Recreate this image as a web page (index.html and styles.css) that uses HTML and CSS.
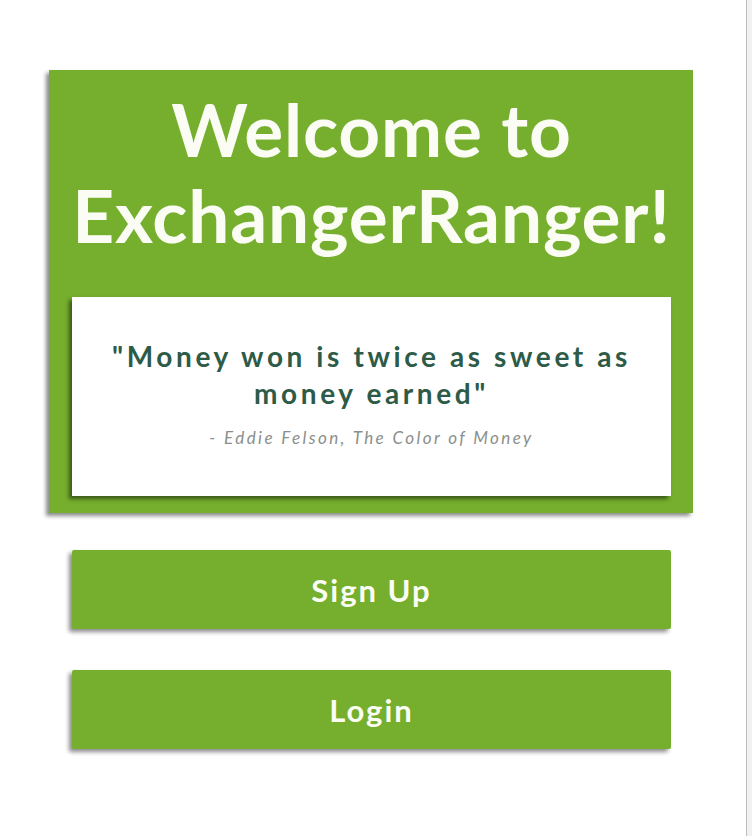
FILE: index.html
```html
<!DOCTYPE html>
<html>
<head>
<meta charset="utf-8">
<link rel="stylesheet" href="styles.css">
</head>
<body>
<div class="page">
  <section class="hero">
    <h1 class="title">Welcome to<br>ExchangerRanger!</h1>
    <div class="quote-card">
      <p class="quote">"Money won is twice as sweet as money earned"</p>
      <p class="cite">- Eddie Felson, The Color of Money</p>
    </div>
  </section>
  <div class="actions">
    <button class="btn">Sign Up</button>
    <button class="btn">Login</button>
  </div>
</div>
</body>
</html>
```

FILE: styles.css
```css
html {
  background: #f1f1f1;
}
body {
  margin: 0;
  font-family: Lato, "Open Sans", sans-serif;
}
.page {
  width: 747px;
  height: 836px;
  background: #ffffff;
  border-right: 1px solid #bdbdbd;
  box-sizing: border-box;
  padding-top: 70px;
  padding-left: 49px;
}
.hero {
  width: 644px;
  height: 443px;
  background: #75af2d;
  box-sizing: border-box;
  padding: 0 22px 0 23px;
  box-shadow: -3px 3px 4px rgba(0, 0, 0, 0.45);
  display: flex;
  flex-direction: column;
}
.title {
  margin: 0;
  height: 227px;
  box-sizing: border-box;
  padding-top: 16px;
  color: #fbfdf5;
  font-size: 73px;
  font-weight: 700;
  line-height: 86px;
  text-align: center;
  letter-spacing: 0.8px;
  white-space: nowrap;
}
.quote-card {
  height: 199px;
  background: #ffffff;
  box-shadow: -3px 3px 4px rgba(0, 0, 0, 0.5);
  box-sizing: border-box;
  padding: 41px 10px 0;
  text-align: center;
}
.quote {
  margin: 0;
  color: #2d5b48;
  font-size: 28px;
  font-weight: 700;
  line-height: 37px;
  letter-spacing: 3.6px;
}
.cite {
  margin: 15px 0 0;
  color: #8a8f8c;
  font-size: 17px;
  font-style: italic;
  letter-spacing: 2.4px;
}
.actions {
  display: flex;
  flex-direction: column;
  gap: 41px;
  margin-top: 37px;
  padding-left: 23px;
}
.btn {
  width: 599px;
  height: 79px;
  border: none;
  border-radius: 2px;
  background: #75af2d;
  color: #fbfdf5;
  font-family: Lato, "Open Sans", sans-serif;
  font-size: 31px;
  font-weight: 700;
  letter-spacing: 2px;
  box-shadow: -3px 3px 4px rgba(0, 0, 0, 0.45);
  padding: 0;
}
```
